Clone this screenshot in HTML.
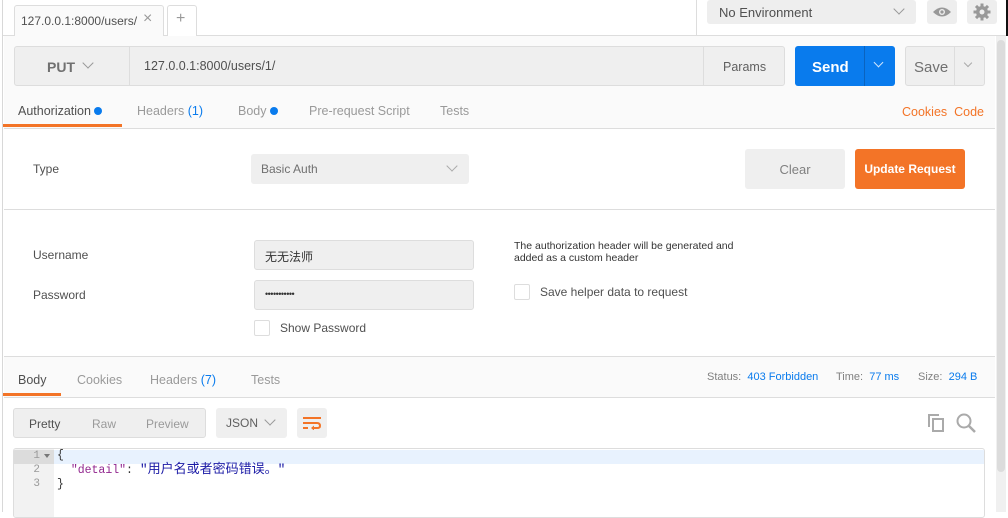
<!DOCTYPE html>
<html><head><meta charset="utf-8"><style>
*{box-sizing:border-box;margin:0;padding:0}
body{width:1008px;height:512px;overflow:hidden;background:#fff;font-family:"Liberation Sans","Noto Sans CJK SC",sans-serif;font-size:13px;color:#505050;position:relative}
.a{position:absolute}
.btn{position:absolute;display:flex;align-items:center;justify-content:center;border-radius:3px}
.chev{display:inline-block;width:8px;height:8px;border-right:1.5px solid #999;border-bottom:1.5px solid #999;transform:rotate(45deg)}
.tab{position:absolute;color:#9a9a9a;font-size:13px}
.cb{position:absolute;width:16px;height:16px;border:1px solid #ddd;border-radius:2px;background:#fff}
</style></head><body>
<div class="a" style="left:0;top:0;width:3px;height:512px;background:#fff;border-right:1px solid #d8d8d8"></div>
<div class="a" style="left:3px;top:35px;width:1003px;height:1px;background:#ddd"></div>
<div class="a" style="left:14px;top:5px;width:150px;height:31px;background:#fafafa;border:1px solid #ddd;border-bottom:none;border-radius:3px 3px 0 0"></div>
<div class="a" style="left:21px;top:14px;font-size:12px;color:#505050">127.0.0.1:8000/users/</div>
<div class="a" style="left:143px;top:10px;font-size:16px;color:#999">×</div>
<div class="a" style="left:167px;top:5px;width:30px;height:31px;border:1px solid #ddd;border-bottom:none;border-radius:3px 3px 0 0;background:#fff"></div>
<div class="a" style="left:176px;top:10px;font-size:16px;color:#999">+</div>
<div class="a" style="left:696px;top:0;width:1px;height:35px;background:#ddd"></div>
<div class="btn" style="left:707px;top:0;width:209px;height:24px;background:#eee;justify-content:flex-start;padding-left:12px;font-size:13px;color:#505050">No Environment</div>
<div class="chev a" style="left:895px;top:5px"></div>
<div class="btn" style="left:927px;top:0;width:30px;height:24px;background:#eee"><svg width="20" height="12" viewBox="0 0 20 12"><path d="M1 6Q10-3 19 6Q10 15 1 6Z" fill="#999"/><circle cx="10" cy="6" r="3" fill="#eee"/><circle cx="10" cy="6" r="1.6" fill="#999"/></svg></div>
<div class="btn" style="left:967px;top:0;width:30px;height:24px;background:#eee"><svg width="18" height="18" viewBox="0 0 18 18"><g fill="#999"><circle cx="9" cy="9" r="6"/><rect x="7.5" y="0.5" width="3" height="17"/><rect x="0.5" y="7.5" width="17" height="3"/><rect x="7.5" y="0.5" width="3" height="17" transform="rotate(45 9 9)"/><rect x="7.5" y="0.5" width="3" height="17" transform="rotate(-45 9 9)"/></g><circle cx="9" cy="9" r="2.5" fill="#eee"/></svg></div>
<div class="a" style="left:1006px;top:0;width:2px;height:36px;background:#111"></div>
<div class="a" style="left:4px;top:36px;width:991px;height:92px;background:#fafafa"></div>
<div class="a" style="left:14px;top:46px;width:771px;height:40px;background:#efefef;border:1px solid #ddd;border-radius:3px"></div>
<div class="a" style="left:129px;top:47px;width:1px;height:38px;background:#ddd"></div>
<div class="a" style="left:703px;top:47px;width:1px;height:38px;background:#ddd"></div>
<div class="a" style="left:47px;top:59px;font-size:14px;color:#707070;font-weight:bold">PUT</div>
<div class="chev a" style="left:84px;top:59px"></div>
<div class="a" style="left:144px;top:59px;font-size:12.5px;color:#505050">127.0.0.1:8000/users/1/</div>
<div class="a" style="left:723px;top:60px;font-size:12.5px;color:#606060">Params</div>
<div class="btn" style="left:795px;top:46px;width:100px;height:40px;background:#097bed"></div>
<div class="a" style="left:812px;top:59px;font-size:15px;font-weight:bold;color:#fff">Send</div>
<div class="a" style="left:864px;top:46px;width:1px;height:40px;background:#0a63bf"></div>
<div class="chev a" style="left:875px;top:59px;border-color:#cfe4fb;width:7px;height:7px"></div>
<div class="a" style="left:905px;top:46px;width:80px;height:40px;background:#efefef;border:1px solid #ddd;border-radius:3px"></div>
<div class="a" style="left:954px;top:47px;width:1px;height:38px;background:#ddd"></div>
<div class="a" style="left:914px;top:59px;font-size:15px;color:#707070">Save</div>
<div class="chev a" style="left:965px;top:60px;width:6px;height:6px;border-color:#aaa"></div>
<div class="a" style="left:18px;top:104px;font-size:12.5px;color:#505050">Authorization <span style="display:inline-block;width:8px;height:8px;border-radius:50%;background:#097bed"></span></div>
<div class="tab" style="left:137px;top:104px;font-size:12.5px">Headers <span style="color:#097bed">(1)</span></div>
<div class="tab" style="left:238px;top:104px;font-size:12.5px">Body <span style="display:inline-block;width:8px;height:8px;border-radius:50%;background:#097bed"></span></div>
<div class="tab" style="left:309px;top:104px;font-size:12.5px">Pre-request Script</div>
<div class="tab" style="left:440px;top:104px;font-size:12.5px">Tests</div>
<div class="a" style="left:902px;top:105px;font-size:12.5px;color:#f37427">Cookies&nbsp;&nbsp;Code</div>
<div class="a" style="left:3px;top:124px;width:119px;height:3px;background:#f37427"></div>
<div class="a" style="left:4px;top:128px;width:991px;height:1px;background:#ddd"></div>
<div class="a" style="left:33px;top:162px;font-size:12px;color:#505050">Type</div>
<div class="btn" style="left:251px;top:154px;width:218px;height:30px;background:#efefef;justify-content:flex-start;padding-left:10px;font-size:12px;color:#707070">Basic Auth</div>
<div class="chev a" style="left:448px;top:162px;border-color:#aaa"></div>
<div class="btn" style="left:745px;top:149px;width:100px;height:40px;background:#efefef;color:#808080;font-size:13px">Clear</div>
<div class="btn" style="left:855px;top:149px;width:110px;height:40px;background:#f37427;color:#fff;font-size:12px;font-weight:bold">Update Request</div>
<div class="a" style="left:4px;top:209px;width:991px;height:1px;background:#ddd"></div>
<div class="a" style="left:33px;top:248px;font-size:12px">Username</div>
<div class="a" style="left:33px;top:288px;font-size:12px">Password</div>
<div class="a" style="left:254px;top:240px;width:220px;height:30px;background:#efefef;border:1px solid #ddd;border-radius:3px;padding:7px 10px;font-size:12px;color:#333">无无法师</div>
<div class="a" style="left:254px;top:280px;width:220px;height:30px;background:#efefef;border:1px solid #ddd;border-radius:3px;padding:8px 10px;font-size:9px;color:#333;letter-spacing:-0.5px">•••••••••••</div>
<div class="cb" style="left:254px;top:320px"></div>
<div class="a" style="left:280px;top:321px;font-size:12px">Show Password</div>
<div class="a" style="left:514px;top:240px;font-size:10.5px;color:#333;line-height:12px">The authorization header will be generated and<br>added as a custom header</div>
<div class="cb" style="left:514px;top:284px"></div>
<div class="a" style="left:540px;top:285px;font-size:12px">Save helper data to request</div>
<div class="a" style="left:4px;top:356px;width:991px;height:1px;background:#ddd"></div>
<div class="a" style="left:4px;top:357px;width:991px;height:40px;background:#fafafa"></div>
<div class="a" style="left:18px;top:373px;font-size:12.5px;color:#505050">Body</div>
<div class="tab" style="left:77px;top:373px;font-size:12.5px">Cookies</div>
<div class="tab" style="left:150px;top:373px;font-size:12.5px">Headers <span style="color:#097bed">(7)</span></div>
<div class="tab" style="left:251px;top:373px;font-size:12.5px">Tests</div>
<div class="a" style="left:707px;top:371px;font-size:11px;color:#808080">Status: &nbsp;<span style="color:#097bed">403 Forbidden</span></div>
<div class="a" style="left:836px;top:371px;font-size:11px;color:#808080">Time: &nbsp;<span style="color:#097bed">77 ms</span></div>
<div class="a" style="left:918px;top:371px;font-size:11px;color:#808080">Size: &nbsp;<span style="color:#097bed">294 B</span></div>
<div class="a" style="left:3px;top:393px;width:58px;height:3px;background:#f37427"></div>
<div class="a" style="left:4px;top:397px;width:991px;height:1px;background:#ddd"></div>
<div class="a" style="left:13px;top:408px;width:193px;height:30px;background:#efefef;border:1px solid #ddd;border-radius:3px"></div>
<div class="a" style="left:29px;top:417px;font-size:12px;color:#505050">Pretty</div>
<div class="a" style="left:92px;top:417px;font-size:12px;color:#9a9a9a">Raw</div>
<div class="a" style="left:146px;top:417px;font-size:12px;color:#9a9a9a">Preview</div>
<div class="btn" style="left:216px;top:408px;width:71px;height:30px;background:#efefef;justify-content:flex-start;padding-left:10px;font-size:12px;color:#606060">JSON</div>
<div class="chev a" style="left:266px;top:416px"></div>
<div class="btn" style="left:297px;top:408px;width:30px;height:30px;background:#efefef"><svg width="18" height="14" viewBox="0 0 18 14"><g stroke="#f37427" stroke-width="2" fill="none"><path d="M0 2H18"/><path d="M0 7H14Q17 7 17 10Q17 12 14 12H9"/><path d="M0 12H5"/></g><path d="M8 12L11 9.5V14.5Z" fill="#f37427"/></svg></div>
<svg class="a" style="left:927px;top:413px" width="18" height="19" viewBox="0 0 18 19"><g fill="none" stroke="#aaa" stroke-width="2"><path d="M2 14V2H12"/><rect x="6" y="6" width="10" height="12"/></g></svg>
<svg class="a" style="left:956px;top:413px" width="20" height="20" viewBox="0 0 20 20"><circle cx="8" cy="8" r="6.5" fill="none" stroke="#aaa" stroke-width="2"/><path d="M13 13L19 19" stroke="#aaa" stroke-width="2.5"/></svg>
<div class="a" style="left:13px;top:448px;width:972px;height:70px;border:1px solid #ddd;border-radius:3px;background:#fff;overflow:hidden">
<div class="a" style="left:0;top:0;width:40px;height:70px;background:#f2f2f2"></div>
<div class="a" style="left:0;top:1px;width:40px;height:14px;background:#dcdcdc"></div>
<div class="a" style="left:40px;top:1px;width:932px;height:14px;background:#e8f2fe"></div>
</div>
<div class="a" style="left:28px;top:449px;font-family:'Liberation Mono',monospace;font-size:11px;line-height:14px;color:#999;text-align:right;width:12px">1<br>2<br>3</div>
<div class="a" style="left:44px;top:454px;width:0;height:0;border-left:3px solid transparent;border-right:3px solid transparent;border-top:4px solid #777"></div>
<div class="a" style="left:57px;top:449px;font-family:'Liberation Mono','Noto Sans CJK SC',monospace;font-size:11.5px;line-height:14px;color:#333;white-space:pre">{
  <span style="color:#92278f">"detail"</span>: <span style="color:#1a1aa6;font-size:13px">"用户名或者密码错误。"</span>
}</div>
<div class="a" style="left:996px;top:36px;width:10px;height:476px;background:#f0f0f0"></div>
<div class="a" style="left:997px;top:40px;width:8px;height:432px;background:#dcdcdc;border-radius:4px"></div>
</body></html>
